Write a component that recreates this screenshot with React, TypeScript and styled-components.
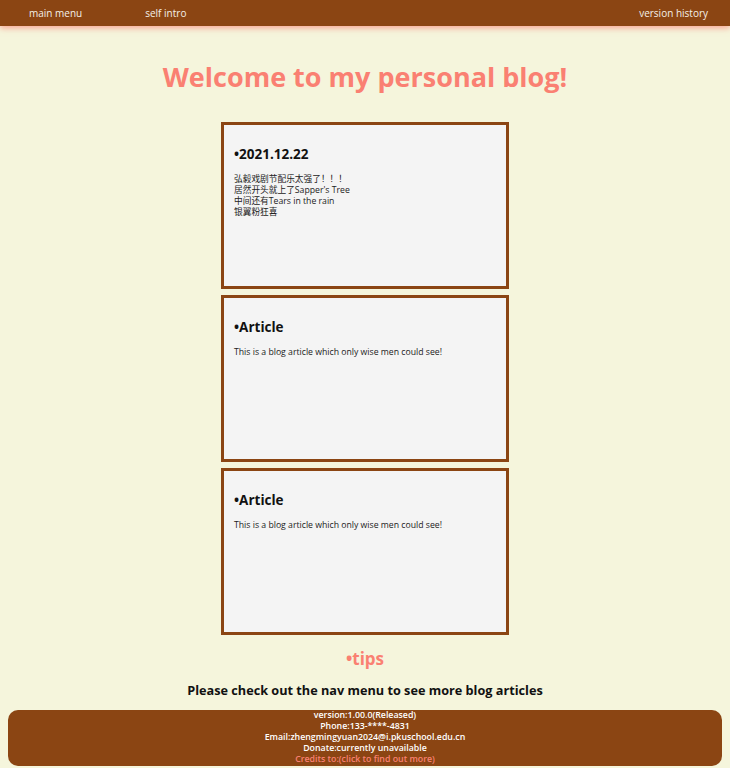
import React from "react";
import styled, { createGlobalStyle } from "styled-components";

const Global = createGlobalStyle`
  html, body {
    margin: 0;
    padding: 0;
    background: #f5f5dc;
    font-family: "Open Sans", "Noto Sans", "Noto Sans CJK SC", sans-serif;
  }
`;

const Page = styled.div`
  display: flex;
  flex-direction: column;
  align-items: center;
  min-height: 768px;
`;

const Nav = styled.nav`
  align-self: stretch;
  height: 26px;
  background: #8b4513;
  box-shadow: 0 2px 6px rgba(250, 128, 114, 0.7);
  display: flex;
  align-items: center;
  padding: 0 22px 0 29px;
`;

const NavLink = styled.a<{ $push?: boolean }>`
  color: #f5f0e8;
  font-size: 10px;
  text-decoration: none;
  margin-right: 63px;
  ${(p) => (p.$push ? "margin-left: auto; margin-right: 0;" : "")}
`;

const Title = styled.h1`
  margin: 33px 0 27px;
  color: #fa8072;
  font-size: 27px;
  font-weight: 700;
  line-height: 36px;
`;

const Cards = styled.div`
  display: flex;
  flex-direction: column;
  gap: 6px;
`;

const Card = styled.section`
  box-sizing: border-box;
  width: 288px;
  height: 167px;
  background: #f4f4f4;
  border: 3px solid #8b4513;
  padding: 20px 10px 0;
`;

const CardTitle = styled.h3`
  margin: 0 0 11px;
  font-size: 13.5px;
  font-weight: 700;
  line-height: 18px;
  color: #111;
`;

const CardText = styled.p`
  margin: 0;
  font-size: 8.7px;
  line-height: 11px;
  color: #222;
`;

const Tips = styled.h2`
  margin: 12px 0 0;
  color: #fa8072;
  font-size: 17px;
  line-height: 24px;
  font-weight: 700;
`;

const Hint = styled.p`
  margin: 10px 0 0;
  font-size: 12.7px;
  font-weight: 700;
  line-height: 18px;
  color: #111;
`;

const Footer = styled.footer`
  align-self: stretch;
  margin: 11px 8px 3px;
  background: #8b4513;
  border-radius: 10px;
  display: flex;
  flex-direction: column;
  align-items: center;
  padding: 0 0 1px;
`;

const FootLine = styled.span<{ $accent?: boolean }>`
  font-size: 8.8px;
  line-height: 11px;
  font-weight: 600;
  color: ${(p) => (p.$accent ? "#fa8072" : "#ffffff")};
`;

export default function App() {
  return (
    <>
      <Global />
      <Page>
        <Nav>
          <NavLink href="#">main menu</NavLink>
          <NavLink href="#">self intro</NavLink>
          <NavLink href="#" $push>
            version history
          </NavLink>
        </Nav>
        <Title>Welcome to my personal blog!</Title>
        <Cards>
          <Card>
            <CardTitle>•2021.12.22</CardTitle>
            <CardText>
              弘毅戏剧节配乐太强了！！！
              <br />
              居然开头就上了Sapper's Tree
              <br />
              中间还有Tears in the rain
              <br />
              银翼粉狂喜
            </CardText>
          </Card>
          <Card>
            <CardTitle>•Article</CardTitle>
            <CardText>This is a blog article which only wise men could see!</CardText>
          </Card>
          <Card>
            <CardTitle>•Article</CardTitle>
            <CardText>This is a blog article which only wise men could see!</CardText>
          </Card>
        </Cards>
        <Tips>•tips</Tips>
        <Hint>Please check out the nav menu to see more blog articles</Hint>
        <Footer>
          <FootLine>version:1.00.0(Released)</FootLine>
          <FootLine>Phone:133-****-4831</FootLine>
          <FootLine>Email:zhengmingyuan2024@i.pkuschool.edu.cn</FootLine>
          <FootLine>Donate:currently unavailable</FootLine>
          <FootLine $accent>Credits to:(click to find out more)</FootLine>
        </Footer>
      </Page>
    </>
  );
}
